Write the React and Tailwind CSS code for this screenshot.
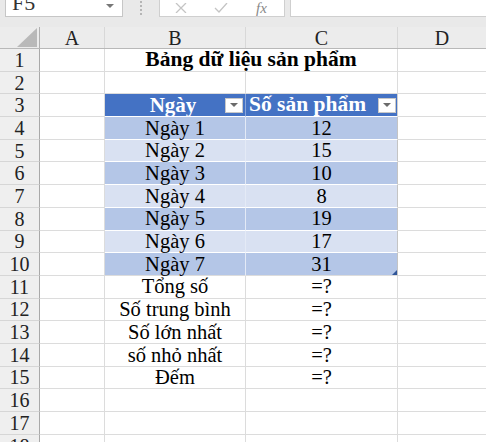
import React from 'react';

const days = [
    { label: 'Ngày 1', qty: 12 },
    { label: 'Ngày 2', qty: 15 },
    { label: 'Ngày 3', qty: 10 },
    { label: 'Ngày 4', qty: 8 },
    { label: 'Ngày 5', qty: 19 },
    { label: 'Ngày 6', qty: 17 },
    { label: 'Ngày 7', qty: 31 },
];

const summary = ['Tổng số', 'Số trung bình', 'Số lớn nhất', 'số nhỏ nhất', 'Đếm'];

const cols = 'grid grid-cols-[40px_65px_141px_152px_1fr]';

function FilterButton() {
    return (
        <span className="flex items-center justify-center w-[18px] h-[15px] bg-white border border-[#c8c8c8]">
            <svg width="8" height="5" viewBox="0 0 8 5"><path d="M0 0h8L4 4z" fill="#6b6b6b" /></svg>
        </span>
    );
}

function Row({ n, children }) {
    return (
        <div className={`${cols} h-[22.7px]`}>
            <div className="flex items-center justify-center bg-[#efefef] border-r border-r-[#a9a9a9] border-b border-b-[#d6d6d6] text-[20px] leading-none text-[#222]">{n}</div>
            <div className="border-r border-b border-[#dcdcdc]" />
            {children}
            <div className="border-b border-[#dcdcdc]" />
        </div>
    );
}

function Cell({ children, className = '' }) {
    return (
        <div className={`flex items-center justify-center text-[20.5px] text-black leading-none ${className}`}>{children}</div>
    );
}

export default function App() {
    return (
        <div className="w-[486px] h-[442px] overflow-hidden bg-white [font-family:'Liberation_Serif',serif]">
            {/* formula bar */}
            <div className="h-[27px] bg-[#e9e9e9] relative overflow-hidden">
                <div className="absolute left-[5px] top-0 w-[118px] h-[17px] bg-white border border-t-0 border-[#c6c6c6] overflow-hidden">
                    <span className="absolute left-[6px] top-[-14px] text-[22px] leading-normal text-[#333]">F5</span>
                    <svg className="absolute right-[8px] top-[4px]" width="8" height="5" viewBox="0 0 8 5"><path d="M0 0h8L4 4z" fill="#777" /></svg>
                </div>
                <div className="absolute left-[140px] top-[1px] flex flex-col gap-[2px]">
                    {[0, 1, 2, 3].map((i) => <span key={i} className="w-[2px] h-[2px] bg-[#b5b5b5]" />)}
                </div>
                <div className="absolute left-[159px] top-0 w-[126px] h-[17px] bg-white border border-t-0 border-[#cfcfcf] flex items-center">
                    <svg className="ml-[15px]" width="12" height="10" viewBox="0 0 12 10"><path d="M1 0l10 10M11 0L1 10" stroke="#c4c4c4" strokeWidth="1.3" /></svg>
                    <svg className="ml-[27px]" width="14" height="10" viewBox="0 0 14 10"><path d="M1 5l4 4 8-9" stroke="#c4c4c4" strokeWidth="1.3" fill="none" /></svg>
                    <span className="ml-[28px] italic text-[15px] leading-none text-[#888]">fx</span>
                </div>
                <div className="absolute left-[290px] right-0 top-0 h-[17px] bg-white border-l border-b border-[#cfcfcf]" />
            </div>

            {/* column headers */}
            <div className={`${cols} h-[22px] bg-[#ececec] border-b border-[#b8b8b8]`}>
                <div className="relative border-r border-[#b0b0b0]">
                    <svg className="absolute right-[2px] bottom-[1px]" width="20" height="19" viewBox="0 0 20 19"><path d="M20 0v19H0z" fill="#b9b9b9" /></svg>
                </div>
                {['A', 'B', 'C', 'D'].map((c, i) => (
                    <div key={c} className={`flex items-center justify-center text-[20px] leading-none text-[#222] ${i < 3 ? 'border-r border-[#d8d8d8]' : ''}`}>{c}</div>
                ))}
            </div>

            <Row n={1}>
                <Cell className="col-span-2 font-bold !text-[21.5px] border-r border-b border-[#dcdcdc]">Bảng dữ liệu sản phẩm</Cell>
            </Row>
            <Row n={2}>
                <Cell className="border-r border-b border-[#dcdcdc]" />
                <Cell className="border-r border-b border-[#dcdcdc]" />
            </Row>
            <Row n={3}>
                <div className="relative flex items-center justify-center bg-[#4472c4] border-r border-[#8aa6da] border-b border-b-white">
                    <span className="text-[21px] font-bold text-white leading-none pr-[4px]">Ngày</span>
                    <span className="absolute right-[2px] top-[4px]"><FilterButton /></span>
                </div>
                <div className="relative flex items-center bg-[#4472c4] border-r border-[#d0d0d0] border-b border-b-white">
                    <span className="text-[21.5px] font-bold text-white leading-none ml-[3px]">Số sản phẩm</span>
                    <span className="absolute right-[1px] top-[4px]"><FilterButton /></span>
                </div>
            </Row>
            {days.map((d, i) => {
                const bg = i % 2 === 0 ? 'bg-[#b4c6e7]' : 'bg-[#d9e1f2]';
                const last = i === days.length - 1;
                return (
                    <Row key={d.label} n={i + 4}>
                        <Cell className={`${bg} border-r border-r-[#e4eaf6] border-b ${last ? 'border-b-[#dcdcdc]' : 'border-b-white'}`}>{d.label}</Cell>
                        <Cell className={`${bg} relative border-r border-r-[#c4c4c4] border-b ${last ? 'border-b-[#dcdcdc]' : 'border-b-white'}`}>
                            {d.qty}
                            {last && (
                                <svg className="absolute right-0 bottom-0" width="5" height="5" viewBox="0 0 5 5"><path d="M5 0v5H0z" fill="#2f5597" /></svg>
                            )}
                        </Cell>
                    </Row>
                );
            })}
            {summary.map((s, i) => (
                <Row key={s} n={i + 11}>
                    <Cell className="border-r border-b border-[#dcdcdc]">{s}</Cell>
                    <Cell className="border-r border-b border-[#dcdcdc]">=?</Cell>
                </Row>
            ))}
            {[16, 17, 18].map((n) => (
                <Row key={n} n={n}>
                    <Cell className="border-r border-b border-[#dcdcdc]" />
                    <Cell className="border-r border-b border-[#dcdcdc]" />
                </Row>
            ))}
        </div>
    );
}
